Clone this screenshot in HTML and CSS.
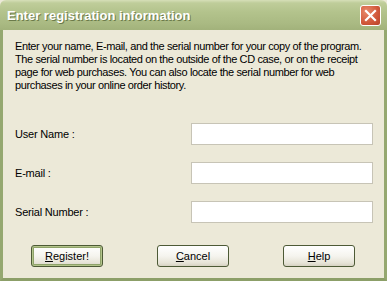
FILE: index.html
```html
<!DOCTYPE html>
<html>
<head>
<meta charset="utf-8">
<link rel="stylesheet" href="styles.css">
</head>
<body>
<div class="window">
  <div class="titlebar">
    <span class="title">Enter registration information</span>
    <button class="close" aria-label="Close">
      <svg width="13" height="13" viewBox="0 0 13 13"><path d="M2 2 L11 11 M11 2 L2 11" stroke="#fff" stroke-width="2.2" stroke-linecap="square"/></svg>
    </button>
  </div>
  <div class="client">
    <p class="intro">Enter your name, E-mail, and the serial number for your copy of the program.<br>The serial number is located on the outside of the CD case, or on the receipt<br>page for web purchases. You can also locate the serial number for web<br>purchases in your online order history.</p>
    <div class="fields">
      <div class="row"><label>User Name :</label><input type="text"></div>
      <div class="row"><label>E-mail :</label><input type="text"></div>
      <div class="row"><label>Serial Number :</label><input type="text"></div>
    </div>
    <div class="buttons">
      <button class="btn default"><u>R</u>egister!</button>
      <button class="btn"><u>C</u>ancel</button>
      <button class="btn"><u>H</u>elp</button>
    </div>
  </div>
</div>
</body>
</html>
```
FILE: styles.css
```css
html, body {
  margin: 0;
  padding: 0;
  width: 387px;
  height: 281px;
  overflow: hidden;
  background: #ece9d8;
}
.window {
  width: 387px;
  height: 281px;
  display: flex;
  flex-direction: column;
  font-family: "Liberation Sans", Arial, sans-serif;
  font-size: 11px;
  color: #000;
}
.titlebar {
  height: 30px;
  flex: none;
  display: flex;
  align-items: center;
  justify-content: space-between;
  padding: 0 6px 0 7px;
  background: linear-gradient(to bottom, #d6dfb8 0px, #bfcd9a 3px, #b3c38c 12px, #a9b982 24px, #a2b27b 30px);
  box-sizing: border-box;
  border-radius: 6px 6px 0 0;
}
.title {
  font-family: "Liberation Sans", Arial, sans-serif;
  font-weight: bold;
  font-size: 13px;
  color: #fff;
  text-shadow: 1px 1px 0 #6b7a4a;
  padding-top: 1px;
}
.close {
  width: 21px;
  height: 21px;
  padding: 0;
  border: 1px solid #fff;
  border-radius: 3px;
  background: radial-gradient(circle at 30% 30%, #e9896a, #d0573a 60%, #b8442a);
  display: flex;
  align-items: center;
  justify-content: center;
  box-sizing: border-box;
}
.client {
  flex: 1;
  background: #ece9d8;
  border-left: 3px solid #95a870;
  border-right: 3px solid #95a870;
  border-bottom: 3px solid #8c9f68;
  padding: 10px 0 0 12px;
  display: flex;
  flex-direction: column;
}
.intro {
  margin: 0;
  white-space: nowrap;
  letter-spacing: -0.38px;
  line-height: 13px;
}
.fields {
  margin-top: 31px;
  display: flex;
  flex-direction: column;
  gap: 17px;
}
.row {
  display: flex;
  align-items: center;
  height: 22px;
}
.row label {
  width: 176px;
  letter-spacing: -0.2px;
}
.row input {
  width: 182px;
  height: 22px;
  box-sizing: border-box;
  margin: 0;
  border: 1px solid #c7c4b6;
  background: #fff;
  outline: none;
}
.buttons {
  margin-top: 22px;
  padding-left: 16px;
  display: flex;
  gap: 54px;
}
.btn {
  width: 72px;
  height: 22px;
  box-sizing: border-box;
  padding: 0;
  font-family: "Liberation Sans", Arial, sans-serif;
  font-size: 11px;
  color: #000;
  border: 1px solid #4d5a36;
  border-radius: 3px;
  background: linear-gradient(to bottom, #ffffff 0%, #f5f4ee 50%, #e6e3d6 85%, #d6d2c2 100%);
}
.btn.default {
  box-shadow: inset 0 0 0 1px #b3c48b, inset 0 0 0 2px #8fa36a;
}
```
